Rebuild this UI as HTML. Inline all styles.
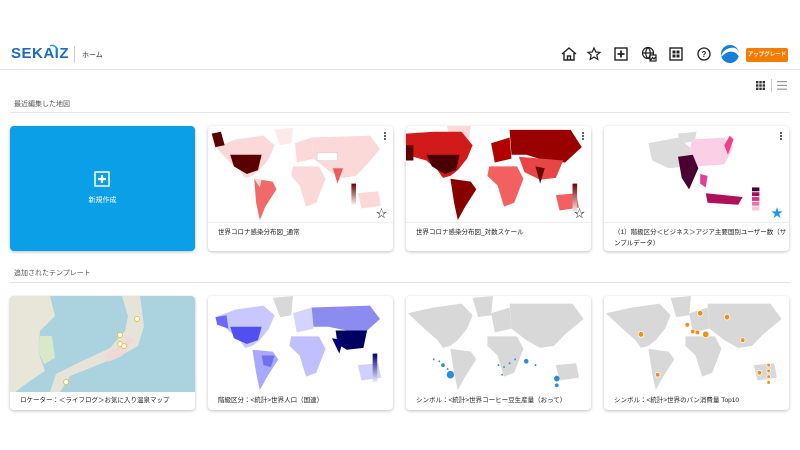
<!DOCTYPE html>
<html><head><meta charset="utf-8"><style>
*{margin:0;padding:0;box-sizing:border-box}
body{width:800px;height:450px;background:#fff;font-family:"Liberation Sans","Noto Sans CJK JP",sans-serif;position:relative;overflow:hidden;color:#333}
.abs{position:absolute}
.card{position:absolute;background:#fff;border-radius:4px;box-shadow:0 1px 3px rgba(0,0,0,.25);overflow:hidden}
.card svg.map{position:absolute;left:0;top:0}
.cap{position:absolute;left:10px;font-size:6.5px;color:#222;line-height:11px}
.dots{position:absolute;right:7px;top:6px;width:2px}
.dots i{display:block;width:2px;height:2px;background:#333;border-radius:1px;margin-bottom:1px}
.sep{position:absolute;left:10px;right:10px;height:1px;background:#e6e6e6}
.lbl{position:absolute;left:14px;font-size:7px;color:#555}
</style></head><body>
<svg width="0" height="0" style="position:absolute"><defs>
<linearGradient id="gr" x1="0" y1="0" x2="0" y2="1"><stop offset="0" stop-color="#6a0000"/><stop offset="1" stop-color="#fff0f0"/></linearGradient><linearGradient id="gb" x1="0" y1="0" x2="0" y2="1"><stop offset="0" stop-color="#00006a"/><stop offset="1" stop-color="#f0f0ff"/></linearGradient>
</defs></svg>

<!-- header -->
<div class="abs" style="left:11px;top:45px;font-size:15px;font-weight:bold;color:#1d6bc0;letter-spacing:0.5px">SEKAIZ</div>
<svg class="abs" style="left:48px;top:43px" width="12" height="12"><path d="M2,3 A5,5 0 0 1 9,9" stroke="#1d9be0" stroke-width="1.5" fill="none"/></svg>
<div class="abs" style="left:74px;top:46px;width:1px;height:17px;background:#ccc"></div>
<div class="abs" style="left:82px;top:50px;font-size:7px;color:#333">ホーム</div>
<svg class="abs" style="left:560px;top:45px" width="18" height="18" viewBox="0 0 18 18" fill="none" stroke="#222" stroke-width="1.4"><path d="M2,9 L9,3 L16,9 M4,8 V15 H14 V8 M7.5,15 V11 H10.5 V15"/></svg>
<svg class="abs" style="left:586px;top:46px" width="16" height="16" viewBox="0 0 24 24" fill="none" stroke="#222" stroke-width="1.8"><path d="M12,3 L14.7,9 L21,9.5 L16.2,13.6 L17.7,20 L12,16.6 L6.3,20 L7.8,13.6 L3,9.5 L9.3,9 Z"/></svg>
<svg class="abs" style="left:614px;top:47px" width="14" height="14" viewBox="0 0 14 14"><rect x="1" y="1" width="12" height="12" fill="none" stroke="#222" stroke-width="1.4"/><path d="M7,3.5V10.5M3.5,7H10.5" stroke="#222" stroke-width="1.8"/></svg>
<svg class="abs" style="left:641px;top:46px" width="16" height="16" viewBox="0 0 16 16" fill="none" stroke="#222" stroke-width="1.2"><circle cx="7" cy="7" r="5.5"/><path d="M1.5,7H12.5M7,1.5C4,4 4,10 7,12.5M7,1.5C10,4 10,10 7,12.5"/><rect x="9" y="9" width="6" height="6" fill="#fff"/><path d="M9.5,14.5 L11.5,11.5 L13,13 L14.5,11" /></svg>
<svg class="abs" style="left:669px;top:47px" width="14" height="14" viewBox="0 0 14 14"><rect x="1" y="1" width="12" height="12" fill="none" stroke="#222" stroke-width="1.4"/><rect x="3.5" y="3.5" width="3" height="3" fill="#222"/><rect x="7.5" y="3.5" width="3" height="3" fill="#222"/><rect x="3.5" y="7.5" width="3" height="3" fill="#222"/><rect x="7.5" y="7.5" width="3" height="3" fill="#222"/></svg>
<svg class="abs" style="left:697px;top:47px" width="14" height="14" viewBox="0 0 14 14"><circle cx="7" cy="7" r="6" fill="none" stroke="#222" stroke-width="1.3"/><text x="7" y="10" font-size="8" text-anchor="middle" font-family="Liberation Sans" font-weight="bold" fill="#222">?</text></svg>
<svg class="abs" style="left:720px;top:44px" width="20" height="20" viewBox="0 0 20 20"><circle cx="10" cy="10" r="9" fill="#1480d8"/><path d="M1,12 C3,6 9,3 15,4 C19,6 20,10 19,13 C17,8 11,6 6,9 C3,11 2,13 1,12Z" fill="#fff"/></svg>
<div class="abs" style="left:746px;top:48px;width:42px;height:14px;background:#f57c00;border-radius:2px;color:#fff;font-size:5.5px;text-align:center;line-height:14px;font-weight:bold">アップグレード</div>
<div class="abs" style="left:0;top:69px;width:800px;height:1px;background:#e4e4e4"></div>
<svg class="abs" style="left:756px;top:81px" width="9" height="9"><g fill="#333"><rect x="0" y="0" width="2.4" height="2.4"/><rect x="3.3" y="0" width="2.4" height="2.4"/><rect x="6.6" y="0" width="2.4" height="2.4"/><rect x="0" y="3.3" width="2.4" height="2.4"/><rect x="3.3" y="3.3" width="2.4" height="2.4"/><rect x="6.6" y="3.3" width="2.4" height="2.4"/><rect x="0" y="6.6" width="2.4" height="2.4"/><rect x="3.3" y="6.6" width="2.4" height="2.4"/><rect x="6.6" y="6.6" width="2.4" height="2.4"/></g></svg>
<div class="abs" style="left:771px;top:79px;width:1px;height:13px;background:#ccc"></div>
<svg class="abs" style="left:777px;top:81px" width="10" height="9"><g fill="#999"><rect y="0" width="10" height="1.2"/><rect y="3.8" width="10" height="1.2"/><rect y="7.6" width="10" height="1.2"/></g></svg>

<div class="lbl" style="top:99px">最近編集した地図</div>
<div class="sep" style="top:112px"></div>

<div class="card" style="left:10px;top:126px;width:185px;height:125px;background:#0a9fe6">
<svg class="abs" style="left:84px;top:45px" width="16" height="16" viewBox="0 0 16 16"><rect x="1" y="1" width="14" height="14" fill="none" stroke="#fff" stroke-width="1.5"/><path d="M8,4V12M4,8H12" stroke="#fff" stroke-width="2.2"/></svg>
<div class="abs" style="left:0;width:185px;top:69px;text-align:center;color:#fff;font-size:7px">新規作成</div>
</div>

<div class="card" style="left:208px;top:126px;width:185px;height:125px">
<svg class="map" width="185" height="96" viewBox="0 0 200 100" preserveAspectRatio="none">
<g fill="#fbd9d9"><path d="M8,22 L30,14 L60,10 L72,20 L66,34 L56,46 L48,52 L40,54 L34,46 L22,36 Z"/><path d="M72,4 L92,2 L90,18 L78,20Z" fill="#fde9e9"/><path d="M94,18 L112,12 L114,34 L96,38Z"/><path d="M92,42 L120,42 L127,55 L117,80 L106,84 L99,62 L90,52Z"/><path d="M112,12 L175,10 L186,24 L172,40 L160,52 L145,54 L130,46 L114,34Z"/><path d="M162,70 L184,68 L187,83 L166,86Z"/></g>
<path d="M4,8 L14,6 L18,20 L8,22Z" fill="#5a0000"/>
<path d="M24,30 L58,30 L54,46 L42,50 L28,42Z" fill="#5a0000"/>
<path d="M50,55 L70,58 L74,66 L62,84 L56,98 L52,80Z" fill="#f06a6a"/>
<path d="M50,55 L58,56 L56,64Z" fill="#fbd9d9"/>
<path d="M135,44 L146,44 L140,60Z" fill="#ef5a5a"/>
<rect x="155" y="60" width="5" height="22" fill="url(#gr)"/>
<rect x="118" y="28" width="22" height="8" fill="#fff" stroke="#ccc" stroke-width=".5"/>
</svg>
<div class="dots"><i></i><i></i><i></i></div>
<div class="abs" style="left:168px;top:79px;font-size:11px;color:#333">☆</div>
<div class="abs" style="left:0;top:96px;width:185px;height:1px;background:#eee"></div>
<div class="cap" style="top:101px">世界コロナ感染分布図_通常</div>
</div>

<div class="card" style="left:406px;top:126px;width:185px;height:125px">
<svg class="map" width="185" height="96" viewBox="0 0 200 100" preserveAspectRatio="none">
<path d="M44,0 L70,0 L68,18 L50,18Z" fill="#fbd9d9"/>
<path d="M0,8 L30,6 L60,6 L72,20 L66,34 L56,46 L48,52 L40,54 L34,46 L22,36 L0,30Z" fill="#d31a1a"/>
<path d="M0,20 L8,20 L8,36 L0,36Z" fill="#5a0000"/>
<path d="M22,30 L58,30 L54,46 L42,50 L28,42Z" fill="#4a0000"/>
<path d="M48,55 L70,58 L76,66 L64,84 L56,98 L52,80Z" fill="#8a0000"/>
<path d="M92,18 L112,12 L114,34 L96,38Z" fill="#b00000"/>
<path d="M90,42 L120,42 L127,55 L117,80 L106,84 L99,62 L88,52Z" fill="#f26060"/>
<path d="M112,4 L178,4 L190,22 L172,38 L150,36 L130,30 L114,30Z" fill="#990000"/>
<path d="M122,32 L170,36 L162,54 L145,56 L128,48 Z" fill="#e84646"/>
<path d="M140,42 L150,44 L145,60Z" fill="#6a0000"/>
<path d="M162,72 L184,70 L187,85 L166,88Z" fill="#f26060"/>
<rect x="180" y="60" width="5" height="30" fill="url(#gr)"/>
</svg>
<div class="dots"><i></i><i></i><i></i></div>
<div class="abs" style="left:168px;top:79px;font-size:11px;color:#333">☆</div>
<div class="abs" style="left:0;top:96px;width:185px;height:1px;background:#eee"></div>
<div class="cap" style="top:101px">世界コロナ感染分布図_対数スケール</div>
</div>

<div class="card" style="left:604px;top:126px;width:185px;height:125px">
<svg class="map" width="185" height="96" viewBox="0 0 200 100" preserveAspectRatio="none">
<path d="M48,18 L80,12 L95,24 L90,42 L70,44 L52,36Z" fill="#dcdcdc"/>
<path d="M80,8 L100,6 L98,16 L82,18Z" fill="#dcdcdc"/>
<path d="M95,14 L130,12 L140,22 L130,40 L100,42 L92,30Z" fill="#fbd0e6"/>
<path d="M80,32 L96,30 L102,44 L92,66 L84,54Z" fill="#4a0030"/>
<path d="M104,50 L112,52 L110,64 L104,60Z" fill="#e0409a"/>
<path d="M130,20 L136,10 L140,14 L134,30 Z" fill="#f0408a"/>
<path d="M110,70 L150,74 L145,82 L112,80Z" fill="#b0105a"/>
<rect x="160" y="64" width="8" height="4" fill="#4a0030"/><rect x="160" y="69" width="8" height="4" fill="#a01060"/><rect x="160" y="74" width="8" height="4" fill="#e0307a"/><rect x="160" y="79" width="8" height="4" fill="#f070b0"/><rect x="160" y="84" width="8" height="4" fill="#fbc8e0"/>
</svg>
<div class="dots"><i></i><i></i><i></i></div>
<div class="abs" style="left:167px;top:78px;font-size:12px;color:#1a9be6">★</div>
<div class="abs" style="left:0;top:96px;width:185px;height:1px;background:#eee"></div>
<div class="cap" style="top:101px;width:174px">（1）階級区分＜ビジネス＞アジア主要国別ユーザー数（サンプルデータ）</div>
</div>

<div class="lbl" style="top:268px">追加されたテンプレート</div>
<div class="sep" style="top:282px"></div>

<div class="card" style="left:10px;top:296px;width:185px;height:114px">
<svg class="map" width="185" height="96" viewBox="0 0 185 96">
<rect width="185" height="96" fill="#aad3df"/>
<path d="M0,0 L40,0 L45,20 L30,35 L28,55 L35,75 L20,85 L5,96 L0,96Z" fill="#e8e6d8"/>
<path d="M30,40 L42,40 L45,62 L34,68 L28,55Z" fill="#d9e8c8"/>
<path d="M112,0 L130,0 L134,30 L128,50 L110,60 L80,72 L60,80 L50,96 L40,96 L46,78 L70,66 L100,52 L115,35 L118,20Z" fill="#e6e4d8"/>
<path d="M95,58 L115,48 L118,40 L124,44 L112,60 L98,66Z" fill="#f0d8d8"/>
<circle cx="127" cy="23" r="2.5" fill="#fff" stroke="#f0c040"/><circle cx="110" cy="39" r="2.5" fill="#fff" stroke="#f0c040"/><circle cx="110" cy="48" r="2.5" fill="#fff" stroke="#f0c040"/><circle cx="114" cy="50" r="2.5" fill="#fff" stroke="#f0c040"/><circle cx="56" cy="86" r="2.5" fill="#fff" stroke="#f0c040"/>
</svg>
<div class="cap" style="top:99px">ロケーター：＜ライフログ＞お気に入り温泉マップ</div>
</div>

<div class="card" style="left:208px;top:296px;width:185px;height:114px">
<svg class="map" width="185" height="96" viewBox="0 0 200 100" preserveAspectRatio="none">
<path d="M8,22 L30,14 L60,10 L72,20 L66,34 L56,46 L48,52 L40,54 L34,46 L22,36 Z" fill="#c8c8ff"/>
<path d="M70,2 L92,0 L90,20 L78,22Z" fill="#d8d8d8"/>
<path d="M8,22 L20,20 L22,34 L10,30Z" fill="#6a6aff"/>
<path d="M24,32 L58,32 L54,46 L42,50 L28,44Z" fill="#5050f0"/>
<path d="M48,56 L70,58 L76,66 L64,84 L56,98 L52,80Z" fill="#a8a8ff"/>
<path d="M58,62 L72,62 L68,74 L60,72Z" fill="#7070f0"/>
<path d="M92,18 L112,12 L114,34 L96,38Z" fill="#d4d4ff"/>
<path d="M90,42 L120,42 L127,55 L117,80 L106,84 L99,62 L88,52Z" fill="#c0c0ff"/>
<path d="M112,12 L175,10 L186,24 L172,36 L150,36 L130,32 L114,32Z" fill="#8c8cf0"/>
<path d="M138,36 L172,36 L168,54 L150,56 L140,50Z" fill="#000060"/>
<path d="M134,44 L146,46 L142,60Z" fill="#000080"/>
<path d="M162,72 L184,70 L187,85 L166,88Z" fill="#d0d0ff"/>
<rect x="178" y="60" width="5" height="30" fill="url(#gb)"/>
</svg>
<div class="cap" style="top:99px">階級区分：&lt;統計&gt;世界人口（国連）</div>
</div>

<div class="card" style="left:406px;top:296px;width:185px;height:114px">
<svg class="map" width="185" height="96" viewBox="0 0 200 100" preserveAspectRatio="none">
<g fill="#d8d8d8"><path d="M2,18 L30,12 L60,8 L72,20 L66,34 L56,46 L48,52 L40,54 L34,46 L22,36 Z"/><path d="M72,2 L94,0 L92,20 L78,22Z"/><path d="M48,55 L70,58 L76,66 L64,84 L56,98 L52,80Z"/><path d="M92,18 L112,12 L114,34 L96,38Z"/><path d="M88,42 L120,42 L127,55 L117,80 L106,84 L99,62 L88,52Z"/><path d="M112,8 L180,8 L192,24 L172,40 L160,52 L145,54 L130,46 L114,34Z"/><path d="M162,72 L184,70 L187,85 L166,88Z"/></g>
<g fill="#2a8ee0"><circle cx="48" cy="82" r="4"/><circle cx="40" cy="72" r="2"/><circle cx="130" cy="68" r="2.5"/><circle cx="30" cy="66" r="1"/><circle cx="36" cy="68" r="1"/><circle cx="100" cy="72" r="1"/><circle cx="106" cy="74" r="1"/><circle cx="112" cy="70" r="1"/><circle cx="118" cy="66" r="1"/><circle cx="140" cy="72" r="1"/><circle cx="104" cy="82" r="1"/><circle cx="45" cy="76" r="1"/><circle cx="163" cy="86" r="3"/><circle cx="163" cy="93" r="2"/></g>
</svg>
<div class="cap" style="top:99px">シンボル：&lt;統計&gt;世界コーヒー豆生産量（おって）</div>
</div>

<div class="card" style="left:604px;top:296px;width:185px;height:114px">
<svg class="map" width="185" height="96" viewBox="0 0 200 100" preserveAspectRatio="none">
<g fill="#d8d8d8"><path d="M2,18 L30,12 L60,8 L72,20 L66,34 L56,46 L48,52 L40,54 L34,46 L22,36 Z"/><path d="M72,2 L94,0 L92,20 L78,22Z"/><path d="M48,55 L70,58 L76,66 L64,84 L56,98 L52,80Z"/><path d="M92,18 L112,12 L114,34 L96,38Z"/><path d="M88,42 L120,42 L127,55 L117,80 L106,84 L99,62 L88,52Z"/><path d="M112,8 L180,8 L192,24 L172,40 L160,52 L145,54 L130,46 L114,34Z"/><path d="M162,72 L184,70 L187,85 L166,88Z"/></g>
<g fill="#f0901a" stroke="#fff" stroke-width=".8"><circle cx="40" cy="40" r="3"/><circle cx="90" cy="30" r="2.5"/><circle cx="96" cy="37" r="2.5"/><circle cx="101" cy="38" r="2.5"/><circle cx="110" cy="40" r="3.5"/><circle cx="104" cy="18" r="3"/><circle cx="133" cy="22" r="3"/><circle cx="150" cy="46" r="2.5"/><circle cx="58" cy="82" r="2.5"/><circle cx="168" cy="80" r="2.5"/><circle cx="178" cy="72" r="2"/><circle cx="178" cy="78" r="2"/><circle cx="178" cy="84" r="2"/><circle cx="178" cy="90" r="2"/></g>
</svg>
<div class="cap" style="top:99px">シンボル：&lt;統計&gt;世界のパン消費量 Top10</div>
</div>
</body></html>
